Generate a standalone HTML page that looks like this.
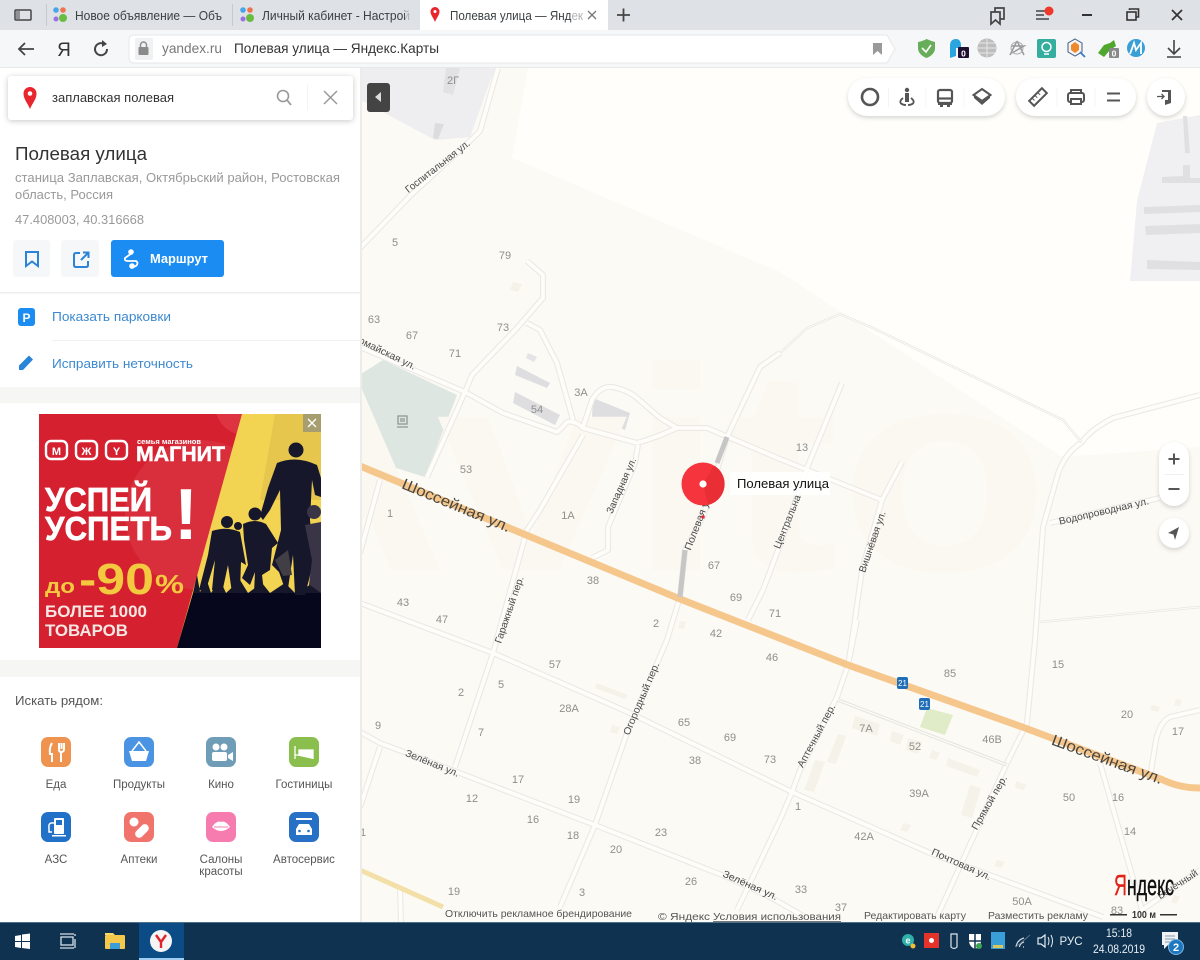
<!DOCTYPE html>
<html lang="ru"><head><meta charset="utf-8"><title>Полевая улица — Яндекс.Карты</title>
<style>
html,body{margin:0;padding:0;width:1200px;height:960px;overflow:hidden;background:#fff}
svg{display:block;font-family:"Liberation Sans","Noto Sans CJK SC",sans-serif;filter:blur(.3px)}
.n{font-size:11px;fill:#8f8f8b;text-anchor:middle;dominant-baseline:central}
.s{font-size:10px;fill:#4a4a48;text-anchor:middle;dominant-baseline:central}
.b{font-size:15.5px;fill:#4a4640;text-anchor:middle;dominant-baseline:central}
.a{font-size:10.5px;fill:#555}
.c{font-size:11.5px;fill:#555;text-anchor:middle}
.e{fill:#f5f2e9}
</style></head><body>
<svg width="1200" height="960" viewBox="0 0 1200 960" xmlns="http://www.w3.org/2000/svg">
<defs>
<g id="r" fill="none" stroke-linejoin="round" stroke-linecap="butt">
<path d="M360 347L465 392L503 413L557 432Q562 428 567 422Q575 420 583 428L637 443Q655 438 677 428L707 428L780 459L882 500"/>
<path d="M527 261L543 275L543 298L517 328L472 375L465 392L427 477"/>
<path d="M527 323L540 330L557 363L573 420"/>
<path d="M583 427L592 400Q600 386 612 387Q628 390 637 398L660 418L677 428"/>
<path d="M583 435L540 510L527 530L493 653L455 767"/>
<path d="M638 445L635 463L608 527L608 550L592 558"/>
<path d="M360 603L493 653L630 713L792 792L930 853L1103 917"/>
<path d="M360 732L380 743L457 772L595 825L727 877L770 897L805 917"/>
<path d="M680 597L667 640L627 733L595 825L560 907"/>
<path d="M380 747L360 807M380 480L360 553"/>
<path d="M857 620L848 665L837 697L800 770L792 792L780 820L737 910"/>
<path d="M842 383L807 468L780 545L763 590L748 620"/>
<path d="M902 462L882 500L862 570L852 640L848 665"/>
<path d="M680 597L685 550L703 517L727 437L760 367L780 353"/>
<path d="M1200 395L1113 418Q1090 430 1082 442Q1063 455 1057 477L1043 527L1035 640L1027 723L1007 763L937 917"/>
<path d="M1050 523L1160 498"/>
<path d="M1200 710L1170 717Q1160 722 1156 740L1150 777"/>
<path d="M1100 763L1142 910L1200 870"/>
<path d="M360 248L410 196L473 138L480 131L498 68"/>
<path d="M400 890L401 922"/>
</g>
<clipPath id="adc"><rect x="39" y="414" width="282" height="234"/></clipPath>
</defs>

<!-- MAP -->
<rect x="360" y="68" width="840" height="855" fill="#fcfaf4"/>
<polygon points="528,68 512,158 780,272 1062,457 1200,447 1200,68" fill="#fffefa"/>
<polygon points="361,68 495,68 470,137 435,140 390,116 361,100" fill="#eeeef1"/>
<polygon points="1157,123 1200,115 1200,281 1130,281 1137,201" fill="#f0f0f3"/>
<polygon points="1183,116 1187,116 1190,153 1185,153" fill="#e0e0e3"/>
<polygon points="1162,177 1183,176 1183,165 1190,165 1190,178 1200,178 1200,183 1162,183" fill="#e0e0e3"/>
<polygon points="1144,207 1200,205 1200,212 1144,214" fill="#e0e0e3"/>
<polygon points="1145,226 1200,224 1200,233 1146,235" fill="#e0e0e3"/>
<polygon points="1147,260 1200,262 1200,270 1147,269" fill="#e0e0e3"/>
<polygon points="446,68 460,68 453,95 443,92" fill="#e2e2e4"/>
<polygon points="435,123 444,124 438,139 433,138" fill="#dcdcdf"/>
<polygon points="383,360 457,395 425,477 361,457 361,374" fill="#dde6e0"/>
<g fill="none" stroke="#8f9a94" stroke-width="1.3"><rect x="398" y="416" width="9" height="8"/><path d="M397 427H408M400 419H405M400 421H405"/></g>
<polygon points="517,366 550,383 547,388 515,375" fill="#dedee1"/>
<polygon points="515,392 560,415 555,425 513,403" fill="#dedee1"/>
<polygon points="593,398 630,413 625,430 592,417" fill="#dedee1"/>
<polygon points="528,353 537,357 534,362 526,358" fill="#e4e4e6"/>
<polygon points="927,708 953,715 945,735 920,727" fill="#e0ecc8"/>
<polygon class="e" points="513,282 522,284 518,292 510,290"/>
<polygon class="e" points="855,716 880,724 877,736 852,728"/>
<polygon class="e" points="892,731 904,735 900,745 890,741"/>
<polygon class="e" points="908,738 922,742 918,754 906,750"/>
<polygon class="e" points="932,750 940,753 936,760 929,758"/>
<polygon class="e" points="948,758 980,770 977,777 946,766"/>
<polygon class="e" points="838,734 846,736 836,764 827,762"/>
<polygon class="e" points="815,760 825,762 814,792 804,790"/>
<polygon class="e" points="970,785 981,788 972,818 961,815"/>
<polygon class="e" points="1016,781 1027,785 1023,790 1015,788"/>
<polygon class="e" points="904,823 911,825 907,832 900,830"/>
<polygon class="e" points="997,860 1005,862 1001,868 994,866"/>
<polygon class="e" points="597,683 628,695 625,699 595,688"/>
<polygon class="e" points="612,725 620,727 617,734 610,732"/>
<polygon class="e" points="680,621 686,622 684,629 678,628"/>
<polygon class="e" points="1152,705 1160,707 1158,712 1150,710"/>
<polygon class="e" points="1176,699 1182,700 1180,706 1174,705"/>
<polygon class="e" points="1174,895 1180,897 1176,904 1171,902"/>
<text x="200" y="570" font-size="290" fill="#fbf8f2" font-weight="bold" textLength="850" lengthAdjust="spacingAndGlyphs">Avito</text>

<use href="#r" stroke="#ebe9e4" stroke-width="6"/>
<use href="#r" stroke="#fefdfa" stroke-width="3.8"/>
<path d="M1040 622L1200 607M780 353L807 328L840 314L873 328L1063 420L1082 443" fill="none" stroke="#e8e6e0" stroke-width="2.4"/>
<path d="M1040 622L1200 607M780 353L807 328L840 314L873 328L1063 420L1082 443" fill="none" stroke="#fdfcf8" stroke-width="1"/>
<path d="M838 700L1007 765" fill="none" stroke="#e4e2dc" stroke-width="3.4"/>
<path d="M838 700L1007 765" fill="none" stroke="#fcfaf5" stroke-width="1.6"/>
<path d="M360 466L680 599L848 665L1025 728L1163 780Q1180 788 1200 788" fill="none" stroke="#f6c78c" stroke-width="7"/>
<path d="M360 870L443 907" fill="none" stroke="#f3e0a8" stroke-width="5"/>
<path d="M680 597L685 550" fill="none" stroke="#c6c6c6" stroke-width="5"/>
<path d="M717 463L727 437" fill="none" stroke="#c6c6c6" stroke-width="5"/>
<text class="b" transform="translate(456 506) rotate(22.5)" textLength="116" lengthAdjust="spacingAndGlyphs">Шоссейная ул.</text>
<text class="b" transform="translate(1107 760) rotate(20)" textLength="117" lengthAdjust="spacingAndGlyphs">Шоссейная ул.</text>
<text class="s" transform="translate(699 522) rotate(-69)" textLength="60" lengthAdjust="spacingAndGlyphs">Полевая ул.</text>
<text class="s" transform="translate(622 486) rotate(-66)" textLength="60" lengthAdjust="spacingAndGlyphs">Западная ул.</text>
<text class="s" transform="translate(510 610) rotate(-71)" textLength="70" lengthAdjust="spacingAndGlyphs">Гаражный пер.</text>
<text class="s" transform="translate(387 354) rotate(26)" textLength="62" lengthAdjust="spacingAndGlyphs">омайская ул.</text>
<text class="s" transform="translate(438 167) rotate(-38)" textLength="79" lengthAdjust="spacingAndGlyphs">Госпитальная ул.</text>
<text class="s" transform="translate(788 522) rotate(-68)" textLength="57" lengthAdjust="spacingAndGlyphs">Центральна</text>
<text class="s" transform="translate(873 542) rotate(-71)" textLength="64" lengthAdjust="spacingAndGlyphs">Вишнёвая ул.</text>
<text class="s" transform="translate(1104 512) rotate(-13)" textLength="92" lengthAdjust="spacingAndGlyphs">Водопроводная ул.</text>
<text class="s" transform="translate(642 699) rotate(-67)" textLength="78" lengthAdjust="spacingAndGlyphs">Огородный пер.</text>
<text class="s" transform="translate(432 764) rotate(22)" textLength="57" lengthAdjust="spacingAndGlyphs">Зелёная ул.</text>
<text class="s" transform="translate(750 886) rotate(24)" textLength="59" lengthAdjust="spacingAndGlyphs">Зелёная ул.</text>
<text class="s" transform="translate(817 736) rotate(-62)" textLength="70" lengthAdjust="spacingAndGlyphs">Аптечный пер.</text>
<text class="s" transform="translate(990 803) rotate(-60)" textLength="61" lengthAdjust="spacingAndGlyphs">Прямой пер.</text>
<text class="s" transform="translate(961 865) rotate(24)" textLength="64" lengthAdjust="spacingAndGlyphs">Почтовая ул.</text>
<text class="s" transform="translate(1178 885) rotate(-33)">Бечечный</text>

<g>
<text class="n" x="453" y="81">2Г</text><text class="n" x="395" y="243">5</text><text class="n" x="505" y="256">79</text><text class="n" x="374" y="320">63</text><text class="n" x="412" y="336">67</text><text class="n" x="455" y="354">71</text><text class="n" x="503" y="328">73</text><text class="n" x="581" y="393">3А</text><text class="n" x="537" y="410">54</text><text class="n" x="466" y="470">53</text><text class="n" x="390" y="514">1</text><text class="n" x="568" y="516">1А</text><text class="n" x="593" y="581">38</text><text class="n" x="403" y="603">43</text><text class="n" x="442" y="620">47</text><text class="n" x="802" y="448">13</text><text class="n" x="714" y="566">67</text><text class="n" x="736" y="598">69</text><text class="n" x="775" y="614">71</text><text class="n" x="656" y="624">2</text><text class="n" x="716" y="634">42</text><text class="n" x="772" y="658">46</text><text class="n" x="950" y="674">85</text><text class="n" x="1058" y="665">15</text><text class="n" x="555" y="665">57</text><text class="n" x="501" y="685">5</text><text class="n" x="461" y="693">2</text><text class="n" x="569" y="709">28А</text><text class="n" x="684" y="723">65</text><text class="n" x="730" y="738">69</text><text class="n" x="770" y="760">73</text><text class="n" x="695" y="761">38</text><text class="n" x="378" y="726">9</text><text class="n" x="481" y="733">7</text><text class="n" x="518" y="780">17</text><text class="n" x="472" y="799">12</text><text class="n" x="574" y="800">19</text><text class="n" x="533" y="820">16</text><text class="n" x="573" y="836">18</text><text class="n" x="661" y="833">23</text><text class="n" x="616" y="850">20</text><text class="n" x="691" y="882">26</text><text class="n" x="801" y="890">33</text><text class="n" x="841" y="908">37</text><text class="n" x="363" y="833">1</text><text class="n" x="454" y="892">19</text><text class="n" x="582" y="893">3</text><text class="n" x="866" y="729">7А</text><text class="n" x="915" y="747">52</text><text class="n" x="992" y="740">46В</text><text class="n" x="919" y="794">39А</text><text class="n" x="864" y="837">42А</text><text class="n" x="798" y="807">1</text><text class="n" x="1069" y="798">50</text><text class="n" x="1118" y="798">16</text><text class="n" x="1130" y="832">14</text><text class="n" x="1127" y="715">20</text><text class="n" x="1178" y="732">17</text><text class="n" x="1022" y="902">50А</text><text class="n" x="1117" y="911">83</text>
</g>
<g><rect x="897" y="677" width="11" height="12" rx="2" fill="#1f6fb8"/><rect x="919" y="698" width="11" height="12" rx="2" fill="#1f6fb8"/><text x="902.500" y="686" font-size="8" fill="#fff" text-anchor="middle">21</text><text x="924.500" y="707" font-size="8" fill="#fff" text-anchor="middle">21</text></g>

<!-- Marker -->
<rect x="730" y="472" width="100" height="23" fill="#fff" fill-opacity=".9"/>
<text x="737" y="488" font-size="13" fill="#111" textLength="92" lengthAdjust="spacingAndGlyphs">Полевая улица</text>
<circle cx="703" cy="484" r="21.500" fill="#f6343d"/>
<path d="M714 465.500A21.500 21.500 0 0 1 708 505L703 484Z" fill="#ea2e36"/>
<circle cx="703" cy="484" r="3.600" fill="#fff"/>
<circle cx="703" cy="517" r="1.800" fill="#e0303a"/>

<!-- Attribution -->
<text class="a" x="445" y="917" textLength="187" lengthAdjust="spacingAndGlyphs">Отключить рекламное брендирование</text>
<text class="a" x="658" y="920" textLength="52" lengthAdjust="spacingAndGlyphs">© Яндекс</text>
<text class="a" x="713" y="920" textLength="128" lengthAdjust="spacingAndGlyphs">Условия использования</text>
<rect x="713" y="921" width="128" height="1" fill="#777"/>
<text class="a" x="864" y="919" textLength="102" lengthAdjust="spacingAndGlyphs">Редактировать карту</text>
<text class="a" x="988" y="919" textLength="100" lengthAdjust="spacingAndGlyphs">Разместить рекламу</text>
<rect x="1110" y="914" width="17" height="1.500" fill="#333"/><rect x="1160" y="914" width="17" height="1.500" fill="#333"/>
<text x="1132" y="918" font-size="10" fill="#333" font-weight="bold" textLength="24" lengthAdjust="spacingAndGlyphs">100 м</text>
<text x="1114" y="895" font-size="29" fill="#111" stroke="#111" stroke-width=".4" textLength="60" lengthAdjust="spacingAndGlyphs"><tspan fill="#e2231a" stroke="#e2231a">Я</tspan>ндекс</text>

<!-- Collapse -->
<rect x="367" y="83" width="23" height="29" rx="3" fill="#444"/>
<path d="M381 92V102L375 97Z" fill="#ddd"/>

<!-- Map controls -->
<g fill="#fff" style="filter:drop-shadow(0 2px 2px rgba(0,0,0,.16))">
<rect x="848" y="78" width="157" height="38" rx="19"/>
<rect x="1016" y="78" width="120" height="38" rx="19"/>
<circle cx="1166" cy="97" r="19"/>
<rect x="1159" y="442" width="30" height="64" rx="15"/>
<circle cx="1174" cy="533" r="15"/>
</g>
<path d="M888.500 88V107M926 88V107M964 88V107M1057 88V107M1095 88V107" stroke="#f4f4f4" fill="none"/>
<rect x="1164" y="474" width="20" height="1" fill="#f0f0f0"/>
<circle cx="870" cy="97" r="8" fill="none" stroke="#555" stroke-width="2.600"/>
<g fill="#555"><circle cx="907" cy="90" r="2.200"/><rect x="905" y="93" width="4" height="9"/></g>
<path d="M903 98Q899 101 901 103.500Q903 105 906 105M911 98Q915 101 913 103.500Q911 105 908 105" fill="none" stroke="#555" stroke-width="1.800"/>
<g fill="none" stroke="#555" stroke-width="2.200"><rect x="938" y="90" width="14" height="13" rx="2"/><path d="M938 98.500H952"/></g><path d="M938 103H952V105H950V107H947V105H943V107H940V105H938Z" fill="#555"/>
<path d="M982 89L990.500 95L982 101L973.500 95Z" fill="#fff" stroke="#555" stroke-width="2"/><path d="M974 96L982 102L990 96L990 98L982 105L974 98Z" fill="#555"/>
<g transform="rotate(-45 1038 97)"><rect x="1029" y="93.500" width="18" height="7" fill="none" stroke="#555" stroke-width="2"/><path d="M1033 94V97M1037 94V97M1041 94V97" stroke="#555"/></g>
<g fill="none" stroke="#555" stroke-width="2"><path d="M1071 93V90H1081V93"/><rect x="1068" y="93" width="16" height="9" rx="2"/><rect x="1071" y="99" width="10" height="5" fill="#fff"/></g>
<path d="M1107 93.500H1120M1107 100.500H1120" stroke="#555" stroke-width="2"/>
<path d="M1162 90H1171V103L1165 105V100H1168V92H1162Z" fill="#555"/><path d="M1157 96.500H1163.500M1161.500 94L1164 96.500L1161.500 99" fill="none" stroke="#555" stroke-width="1.300"/>
<path d="M1168.500 459H1179.500M1174 453.500V464.500M1168.500 489H1179.500" stroke="#555" stroke-width="2"/>
<path d="M1179 527L1175 540L1173.500 534.500L1168 533Z" fill="#555"/>

<!-- SIDEBAR -->
<rect x="0" y="68" width="360" height="855" fill="#fff"/>
<rect x="360" y="68" width="2" height="855" fill="#ececea"/>
<rect x="8" y="76" width="345" height="44" rx="3" fill="#fff" style="filter:drop-shadow(0 1px 3px rgba(0,0,0,.22))"/>
<path d="M30 109C27 102 23.500 99 23.500 93.500A6.500 6.500 0 0 1 36.500 93.500C36.500 99 33 102 30 109Z" fill="#e8262e"/>
<circle cx="30" cy="93.500" r="2.300" fill="#fff"/>
<text x="52" y="102" font-size="13" fill="#333" textLength="122" lengthAdjust="spacingAndGlyphs">заплавская полевая</text>
<circle cx="283" cy="96" r="5.500" fill="none" stroke="#999" stroke-width="1.600"/><path d="M287 100L291 105" stroke="#999" stroke-width="1.800"/>
<path d="M324 91L337 104M337 91L324 104" stroke="#999" stroke-width="1.500"/>
<rect x="307" y="84" width="1" height="26" fill="#f4f4f4"/>

<text x="15" y="160" font-size="18" fill="#333" textLength="132" lengthAdjust="spacingAndGlyphs">Полевая улица</text>
<text x="15" y="182" font-size="13" fill="#999" textLength="325" lengthAdjust="spacingAndGlyphs">станица Заплавская, Октябрьский район, Ростовская</text>
<text x="15" y="199" font-size="13" fill="#999" textLength="98" lengthAdjust="spacingAndGlyphs">область, Россия</text>
<text x="15" y="224" font-size="13" fill="#999" textLength="129" lengthAdjust="spacingAndGlyphs">47.408003, 40.316668</text>
<rect x="13" y="240" width="37" height="37" rx="3" fill="#f6f7f9"/>
<rect x="61" y="240" width="38" height="37" rx="3" fill="#f6f7f9"/>
<rect x="111" y="240" width="113" height="37" rx="3" fill="#1b8cf2"/>
<path d="M26 252H38V266L32 261.500L26 266Z" fill="none" stroke="#2a85d8" stroke-width="2"/>
<path d="M80 253H76Q74 253 74 255V265Q74 267 76 267H86Q88 267 88 265V261M81 260L88 253M83 252.500H88.500V258" fill="none" stroke="#2a85d8" stroke-width="2"/>
<path d="M132 253L125 258Q124 261 128 261L136 261Q139 263 136 266L131 268" fill="none" stroke="#fff" stroke-width="1.800"/>
<circle cx="131" cy="252" r="2.800" fill="#fff"/><circle cx="132" cy="266" r="2.800" fill="#fff"/>
<text x="150" y="263" font-size="13" font-weight="bold" fill="#fff" textLength="58" lengthAdjust="spacingAndGlyphs">Маршрут</text>
<rect x="0" y="292" width="360" height="1.500" fill="#eee"/>
<rect x="18" y="308" width="17" height="18" rx="3" fill="#1b8cf2"/>
<text x="26.500" y="322" font-size="12" font-weight="bold" fill="#fff" text-anchor="middle">P</text>
<text x="52" y="321" font-size="13" fill="#3d89d0" textLength="119" lengthAdjust="spacingAndGlyphs">Показать парковки</text>
<rect x="52" y="340" width="308" height="1" fill="#f0f0f0"/>
<path d="M19 370V365.500L29 355.500L33 359.500L23 370Z" fill="#2a85d8"/>
<text x="52" y="368" font-size="13" fill="#3d89d0" textLength="141" lengthAdjust="spacingAndGlyphs">Исправить неточность</text>
<rect x="0" y="387" width="360" height="16" fill="#f6f6f5"/>
<rect x="0" y="660" width="360" height="17" fill="#f6f6f5"/>

<!-- AD -->
<rect x="39" y="414" width="282" height="234" fill="#d4202f"/>
<circle cx="245" cy="405" r="30" fill="#de3340" clip-path="url(#adc)"/>
<circle cx="200" cy="515" r="75" fill="#d92f3d" clip-path="url(#adc)"/>
<polygon points="242,414 321,414 321,648 177,648" fill="#f3d452"/>
<polygon points="275,414 321,414 321,500 260,500" fill="#e6c64c"/>
<polygon points="193,593 321,593 321,648 177,648" fill="#06061c"/>
<!-- silhouettes -->
<g fill="#17172c">
<circle cx="296" cy="450" r="7.500"/>
<path d="M277 463Q296 455 317 465L321 478L321 497L315 495L312 480L310 520L314 560L305 595L295 595L293 555L287 595L279 572L272 565L281 530L280 490L270 510L263 520L260 516L268 488Z"/>
<circle cx="227" cy="522" r="6"/><path d="M212 531Q227 526 240 532L246 565L241 562L240 590L232 593L228 565L222 593L212 590L215 560L206 590L199 590L208 555Z"/>
<circle cx="255" cy="514" r="6.500"/><path d="M243 524Q255 518 266 524L278 543L272 548L270 570L262 575L264 592L254 593L255 572L250 585L242 578L248 565L244 540Z"/>
<circle cx="238" cy="526" r="4"/>
<circle cx="314" cy="512" r="7" fill="#3a3546"/><path d="M305 525L321 522V593H308L312 560Z" fill="#3a3546"/>
<path d="M275 560L288 550L292 575L283 576Z" fill="#413e46"/>
<path d="M193 593L197 575L200 592L206 578L211 593L220 580L226 593L240 580L248 593L262 583L270 593L285 583L295 593L310 585L321 593Z"/>
</g>
<!-- logos -->
<g fill="none" stroke="#fff" stroke-width="2.400"><rect x="46" y="441" width="21" height="18" rx="5"/><rect x="76" y="441" width="21" height="18" rx="5"/><rect x="106" y="441" width="21" height="18" rx="5"/></g>
<text x="56.500" y="455" font-size="11" font-weight="bold" fill="#fff" text-anchor="middle">М</text>
<text x="86.500" y="455" font-size="11" font-weight="bold" fill="#fff" text-anchor="middle">Ж</text>
<text x="116.500" y="455" font-size="11" font-weight="bold" fill="#fff" text-anchor="middle">Y</text>
<text x="137" y="444" font-size="7" font-weight="bold" fill="#fff" textLength="64" lengthAdjust="spacingAndGlyphs">семья магазинов</text>
<text x="136" y="461" font-size="21" font-weight="bold" fill="#fff" stroke="#fff" stroke-width=".5" textLength="89" lengthAdjust="spacingAndGlyphs">МАГНИТ</text>
<text x="45" y="511" font-size="33" font-weight="bold" fill="#fff" stroke="#fff" stroke-width=".7" textLength="107" lengthAdjust="spacingAndGlyphs">УСПЕЙ</text>
<text x="45" y="540" font-size="33" font-weight="bold" fill="#fff" stroke="#fff" stroke-width=".7" textLength="127" lengthAdjust="spacingAndGlyphs">УСПЕТЬ</text>
<text x="186" y="539" font-size="72" font-weight="bold" fill="#fff" text-anchor="middle">!</text>
<text x="45" y="593" font-size="20" font-weight="bold" fill="#f3c93f" textLength="30" lengthAdjust="spacingAndGlyphs">до</text>
<text x="79" y="594" font-size="44" font-weight="bold" fill="#f3c93f" textLength="75" lengthAdjust="spacingAndGlyphs">-90</text>
<text x="155" y="593" font-size="26" font-weight="bold" fill="#f3c93f" textLength="29" lengthAdjust="spacingAndGlyphs">%</text>
<text x="45" y="617" font-size="16.500" font-weight="bold" fill="#f6e7e2" textLength="102" lengthAdjust="spacingAndGlyphs">БОЛЕЕ 1000</text>
<text x="45" y="636" font-size="16.500" font-weight="bold" fill="#f6e7e2" textLength="83" lengthAdjust="spacingAndGlyphs">ТОВАРОВ</text>
<rect x="303" y="414" width="18" height="18" fill="#a79e70"/>
<path d="M308 419L316 427M316 419L308 427" stroke="#fff" stroke-width="1.300"/>

<!-- Nearby -->
<text x="15" y="705" font-size="13" fill="#555" textLength="88" lengthAdjust="spacingAndGlyphs">Искать рядом:</text>
<rect x="41" y="737" width="30" height="30" rx="7" fill="#ef9450"/>
<path d="M52 743Q49 748 50 754H52V762M59 743V749Q59 752 61 752V762M61 752Q64 752 64 749V743M61.500 743V749" fill="none" stroke="#fff" stroke-width="2"/>
<rect x="124" y="737" width="30" height="30" rx="7" fill="#4b93e3"/>
<path d="M129 751H149L146 761H132Z" fill="#fff"/><path d="M132 751L139 742L146 751" fill="none" stroke="#fff" stroke-width="1.500"/>
<rect x="206" y="737" width="30" height="30" rx="7" fill="#6f9db8"/>
<circle cx="216" cy="747" r="3.500" fill="#fff"/><circle cx="224" cy="747" r="3.500" fill="#fff"/><rect x="212" y="752" width="15" height="9" rx="2" fill="#fff"/><path d="M228 755L233 752V761L228 758Z" fill="#fff"/>
<rect x="289" y="737" width="30" height="30" rx="7" fill="#8bbf4d"/>
<path d="M295 746V759M295 755H313V759M299 750H313V754H299Z" stroke="#fff" fill="#fff" stroke-width="1.300"/>
<rect x="41" y="812" width="30" height="30" rx="7" fill="#2171c9"/>
<rect x="54" y="818" width="10" height="16" rx="1" fill="#fff"/><rect x="56" y="820" width="6" height="5" fill="#2171c9"/><rect x="52" y="835" width="14" height="1.500" fill="#fff"/><path d="M54 823Q48 822 49 828V832H52" fill="none" stroke="#fff" stroke-width="1.500"/>
<rect x="124" y="812" width="30" height="30" rx="7" fill="#f0746b"/>
<circle cx="134" cy="822" r="4.500" fill="#fff"/><g transform="rotate(-45 142 831)"><rect x="134" y="827" width="16" height="8" rx="4" fill="#fff"/></g>
<rect x="206" y="812" width="30" height="30" rx="7" fill="#f67cb0"/>
<path d="M212 827Q217 820 221 822Q225 820 230 827Q221 835 212 827Z" fill="#fff"/><path d="M214 827H228" stroke="#f67cb0"/>
<rect x="289" y="812" width="30" height="30" rx="7" fill="#2670c5"/>
<path d="M296 835V829L299 824H309L312 829V835Z" fill="#fff"/><path d="M296 819H312" stroke="#fff" stroke-width="2"/><circle cx="299.500" cy="831" r="1.300" fill="#2670c5"/><circle cx="308.500" cy="831" r="1.300" fill="#2670c5"/>
<text class="c" x="56" y="788">Еда</text><text class="c" x="139" y="788">Продукты</text><text class="c" x="221" y="788">Кино</text><text class="c" x="304" y="788">Гостиницы</text>
<text class="c" x="56" y="863">АЗС</text><text class="c" x="139" y="863">Аптеки</text><text class="c" x="221" y="863">Салоны</text><text class="c" x="221" y="875">красоты</text><text class="c" x="304" y="863">Автосервис</text>

<!-- TAB BAR -->
<rect x="0" y="0" width="1200" height="30" fill="#dee1e6"/>
<rect x="15" y="10" width="16" height="10" rx="1" fill="none" stroke="#444" stroke-width="1.500"/><rect x="16" y="11" width="4" height="8" fill="#444" fill-opacity=".5"/>
<rect x="46" y="4" width="1" height="22" fill="#c6c9ce"/><rect x="232" y="4" width="1" height="22" fill="#c6c9ce"/>
<g><circle cx="56" cy="10" r="2.800" fill="#4aa4e8"/><circle cx="63" cy="10" r="2.800" fill="#f0744a"/><circle cx="56" cy="19" r="2.500" fill="#9a6fe0"/><circle cx="63" cy="18" r="4" fill="#68bd3f"/></g>
<g><circle cx="243" cy="10" r="2.800" fill="#4aa4e8"/><circle cx="250" cy="10" r="2.800" fill="#f0744a"/><circle cx="243" cy="19" r="2.500" fill="#9a6fe0"/><circle cx="250" cy="18" r="4" fill="#68bd3f"/></g>
<text x="75" y="20" font-size="12.500" fill="#3c4043" textLength="147" lengthAdjust="spacingAndGlyphs">Новое объявление — Объ</text>
<text x="262" y="20" font-size="12.500" fill="#3c4043" textLength="148" lengthAdjust="spacingAndGlyphs">Личный кабинет - Настрой</text>
<rect x="405" y="5" width="15" height="20" fill="#dee1e6" fill-opacity=".7"/>
<rect x="420" y="0" width="188" height="31" fill="#fff"/>
<path d="M435 22C433 17 430.500 15 430.500 11.500A4.500 4.500 0 0 1 439.500 11.500C439.500 15 437 17 435 22Z" fill="#e8262e"/><circle cx="435" cy="11.500" r="1.500" fill="#fff"/>
<text x="450" y="20" font-size="12.500" fill="#3c4043" textLength="133" lengthAdjust="spacingAndGlyphs">Полевая улица — Яндек</text>
<rect x="572" y="5" width="12" height="20" fill="#fff" fill-opacity=".6"/>
<path d="M588 11L596 19M596 11L588 19" stroke="#777" stroke-width="1.300"/>
<path d="M617 15H630M623.500 8.500V21.500" stroke="#444" stroke-width="1.800"/>
<path d="M991 12H1000V24L995.500 20L991 24Z M995 12V8H1004V19H1000" fill="none" stroke="#444" stroke-width="1.700"/>
<path d="M1036 11H1048M1036 15H1044M1036 19H1049" stroke="#444" stroke-width="1.500"/><circle cx="1049" cy="11" r="4.500" fill="#f0382a"/>
<path d="M1082 15H1092" stroke="#333" stroke-width="2"/>
<rect x="1127" y="12" width="9" height="8" fill="none" stroke="#333" stroke-width="1.600"/><path d="M1129.500 10V9H1138.500V17H1136.500" fill="none" stroke="#333" stroke-width="1.600"/>
<path d="M1172 10L1182 20M1182 10L1172 20" stroke="#333" stroke-width="1.700"/>

<!-- TOOLBAR -->
<rect x="0" y="30" width="1200" height="38" fill="#f6f7f8"/>
<rect x="0" y="67" width="1200" height="1" fill="#e8e8e6"/>
<path d="M19 49H34M25 43L19 49L25 55" fill="none" stroke="#444" stroke-width="1.800"/>
<text x="64" y="56" font-size="19" fill="#333" text-anchor="middle">Я</text>
<path d="M107 49A6 6 0 1 1 104 44" fill="none" stroke="#444" stroke-width="2"/><path d="M102 40L107 44L102 47Z" fill="#444"/>
<path d="M134 35H887L895 49L887 63H134Q129 63 129 58V40Q129 35 134 35Z" fill="#fff" stroke="#e6e7e9"/>
<rect x="135" y="38" width="18" height="22" rx="2" fill="#f0f1f3"/>
<rect x="138.500" y="47" width="10" height="8" rx="1" fill="#8a8a8a"/><path d="M140.500 47V45A3 3 0 0 1 146.500 45V47" fill="none" stroke="#8a8a8a" stroke-width="1.400"/>
<text x="162" y="53" font-size="14" fill="#777" textLength="60" lengthAdjust="spacingAndGlyphs">yandex.ru</text>
<text x="234" y="53" font-size="14" fill="#333" textLength="205" lengthAdjust="spacingAndGlyphs">Полевая улица — Яндекс.Карты</text>
<path d="M873 43H882V55L877.500 51L873 55Z" fill="#9a9a9a"/>
<path d="M918 42Q923 41 926.500 39Q931 41 935 42V49Q934 55 926.500 58Q919 55 918 49Z" fill="#68ae5a"/><path d="M922 48L926 52L931 45" fill="none" stroke="#fff" stroke-width="1.600"/>
<path d="M950 58V46Q950 39 956 39Q961 39 961 46V48H956V56Z" fill="#2aa5e0"/><rect x="958" y="47" width="11" height="11" rx="1" fill="#1f1030"/><text x="963.500" y="56.500" font-size="8.500" font-weight="bold" fill="#fff" text-anchor="middle">0</text>
<circle cx="987" cy="48" r="9.500" fill="#bdbdbd"/><path d="M978 48H996M987 39V57M979 43H995M979 53H995" stroke="#e6e6e6"/>
<path d="M1017 41L1010 55M1017 41L1024 55M1011 46H1024L1012 53" fill="none" stroke="#9a9a9a" stroke-width="1.500"/><circle cx="1017" cy="48" r="6" fill="none" stroke="#aaa"/>
<rect x="1037" y="39" width="19" height="19" rx="2" fill="#35ad9f"/><circle cx="1046.500" cy="47" r="4.500" fill="none" stroke="#fff" stroke-width="1.500"/><path d="M1044 54H1049" stroke="#fff" stroke-width="1.500"/>
<path d="M1075 39L1082 43V52L1075 56L1068 52V43Z" fill="#f4f4f2" stroke="#3d5a88"/><path d="M1075 42L1079 45V50L1075 53L1071 50V45Z" fill="#ee8a2c"/><path d="M1080 52L1085 57" stroke="#3d7ac8" stroke-width="1.800"/>
<path d="M1098 53L1104 45L1110 43L1114 40L1116 46L1110 50L1104 57Z" fill="#4fa72d"/><rect x="1109" y="48" width="10" height="10" rx="1" fill="#8a8a8a"/><text x="1114" y="56.500" font-size="8.500" font-weight="bold" fill="#fff" text-anchor="middle">0</text>
<circle cx="1136" cy="48" r="9" fill="#3a9fd6"/><path d="M1130 54L1134 43L1136 50L1141 43L1141 54" fill="none" stroke="#fff" stroke-width="1.800"/>
<path d="M1174 40V54M1168 48L1174 54L1180 48M1167 57H1181" fill="none" stroke="#444" stroke-width="1.600"/>

<!-- TASKBAR -->
<rect x="0" y="922" width="1200" height="38" fill="#0e3250"/>
<rect x="0" y="922" width="1200" height="1" fill="#4e7088"/>
<rect x="139" y="923" width="45" height="37" fill="#0b4c86"/>
<rect x="139" y="958" width="45" height="2" fill="#9ecdf0"/>
<g fill="#fff"><polygon points="15,936 21,935 21,941 15,941"/><polygon points="22,934.500 30,933.500 30,941 22,941"/><polygon points="15,942 21,942 21,948 15,947"/><polygon points="22,942 30,942 30,949 22,948"/></g>
<g fill="none" stroke="#d8e0e6" stroke-width="1.300"><rect x="61" y="937" width="12" height="8"/><path d="M60 934H74M60 948H74M75 934V936M75 939V948"/></g>
<rect x="105" y="935" width="20" height="14" rx="1" fill="#f4c84a"/><path d="M105 935V933H113L115 935" fill="#f8d96a"/><rect x="110" y="943" width="10" height="6" fill="#3b9ed6"/>
<circle cx="161" cy="941" r="11" fill="#f5f5f5"/><path d="M156 935L161 942L166 935M161 942V948" fill="none" stroke="#e0222a" stroke-width="2.400"/>
<circle cx="908" cy="940" r="6" fill="#2fb0a8"/><text x="908" y="943.500" font-size="9" font-weight="bold" fill="#fff" text-anchor="middle">e</text><circle cx="913" cy="946" r="2.500" fill="#f0c030"/>
<rect x="924" y="933" width="15" height="15" fill="#e5332a"/><circle cx="931.500" cy="940.500" r="2.500" fill="#fff"/>
<path d="M951 934H957V947Q954 950 951 947Z" fill="none" stroke="#dfe6ea" stroke-width="1.200"/>
<path d="M969 934H981V942Q980 947 975 949Q970 947 969 942Z" fill="#fff"/><path d="M975 934V949M969 941H981" stroke="#0e3250" stroke-width="1.500"/><circle cx="979" cy="946" r="3" fill="#3aa655"/>
<rect x="991" y="932" width="14" height="17" fill="#3a9ed8"/><rect x="993" y="945" width="10" height="3" fill="#dcc85a"/>
<path d="M1016 947Q1017 940 1024 938M1019.500 947Q1020 943 1024 942M1023 947H1024" fill="none" stroke="#cfd8de" stroke-width="1.200"/><path d="M1016 947L1030 935" stroke="#59748a"/>
<path d="M1038 938H1041L1045 935V947L1041 944H1038Z" fill="none" stroke="#e5ecf0" stroke-width="1.200"/><path d="M1048 937Q1050 941 1048 945M1051 935Q1054 941 1051 947" fill="none" stroke="#e5ecf0"/>
<text x="1071" y="945" font-size="11.500" fill="#e8eef2" text-anchor="middle">РУС</text>
<text x="1119" y="937" font-size="12" fill="#e8eef2" text-anchor="middle" textLength="26" lengthAdjust="spacingAndGlyphs">15:18</text>
<text x="1119" y="953" font-size="12" fill="#e8eef2" text-anchor="middle" textLength="52" lengthAdjust="spacingAndGlyphs">24.08.2019</text>
<path d="M1162 932H1178V945H1168L1164 949V945H1162Z" fill="#f0f3f5"/><path d="M1165 936H1175M1165 939H1175M1165 942H1172" stroke="#8a9aa6"/>
<circle cx="1176" cy="947" r="7.500" fill="#1c77c0" stroke="#7db6e0"/><text x="1176" y="951" font-size="11" font-weight="bold" fill="#fff" text-anchor="middle">2</text>
</svg>
</body></html>
